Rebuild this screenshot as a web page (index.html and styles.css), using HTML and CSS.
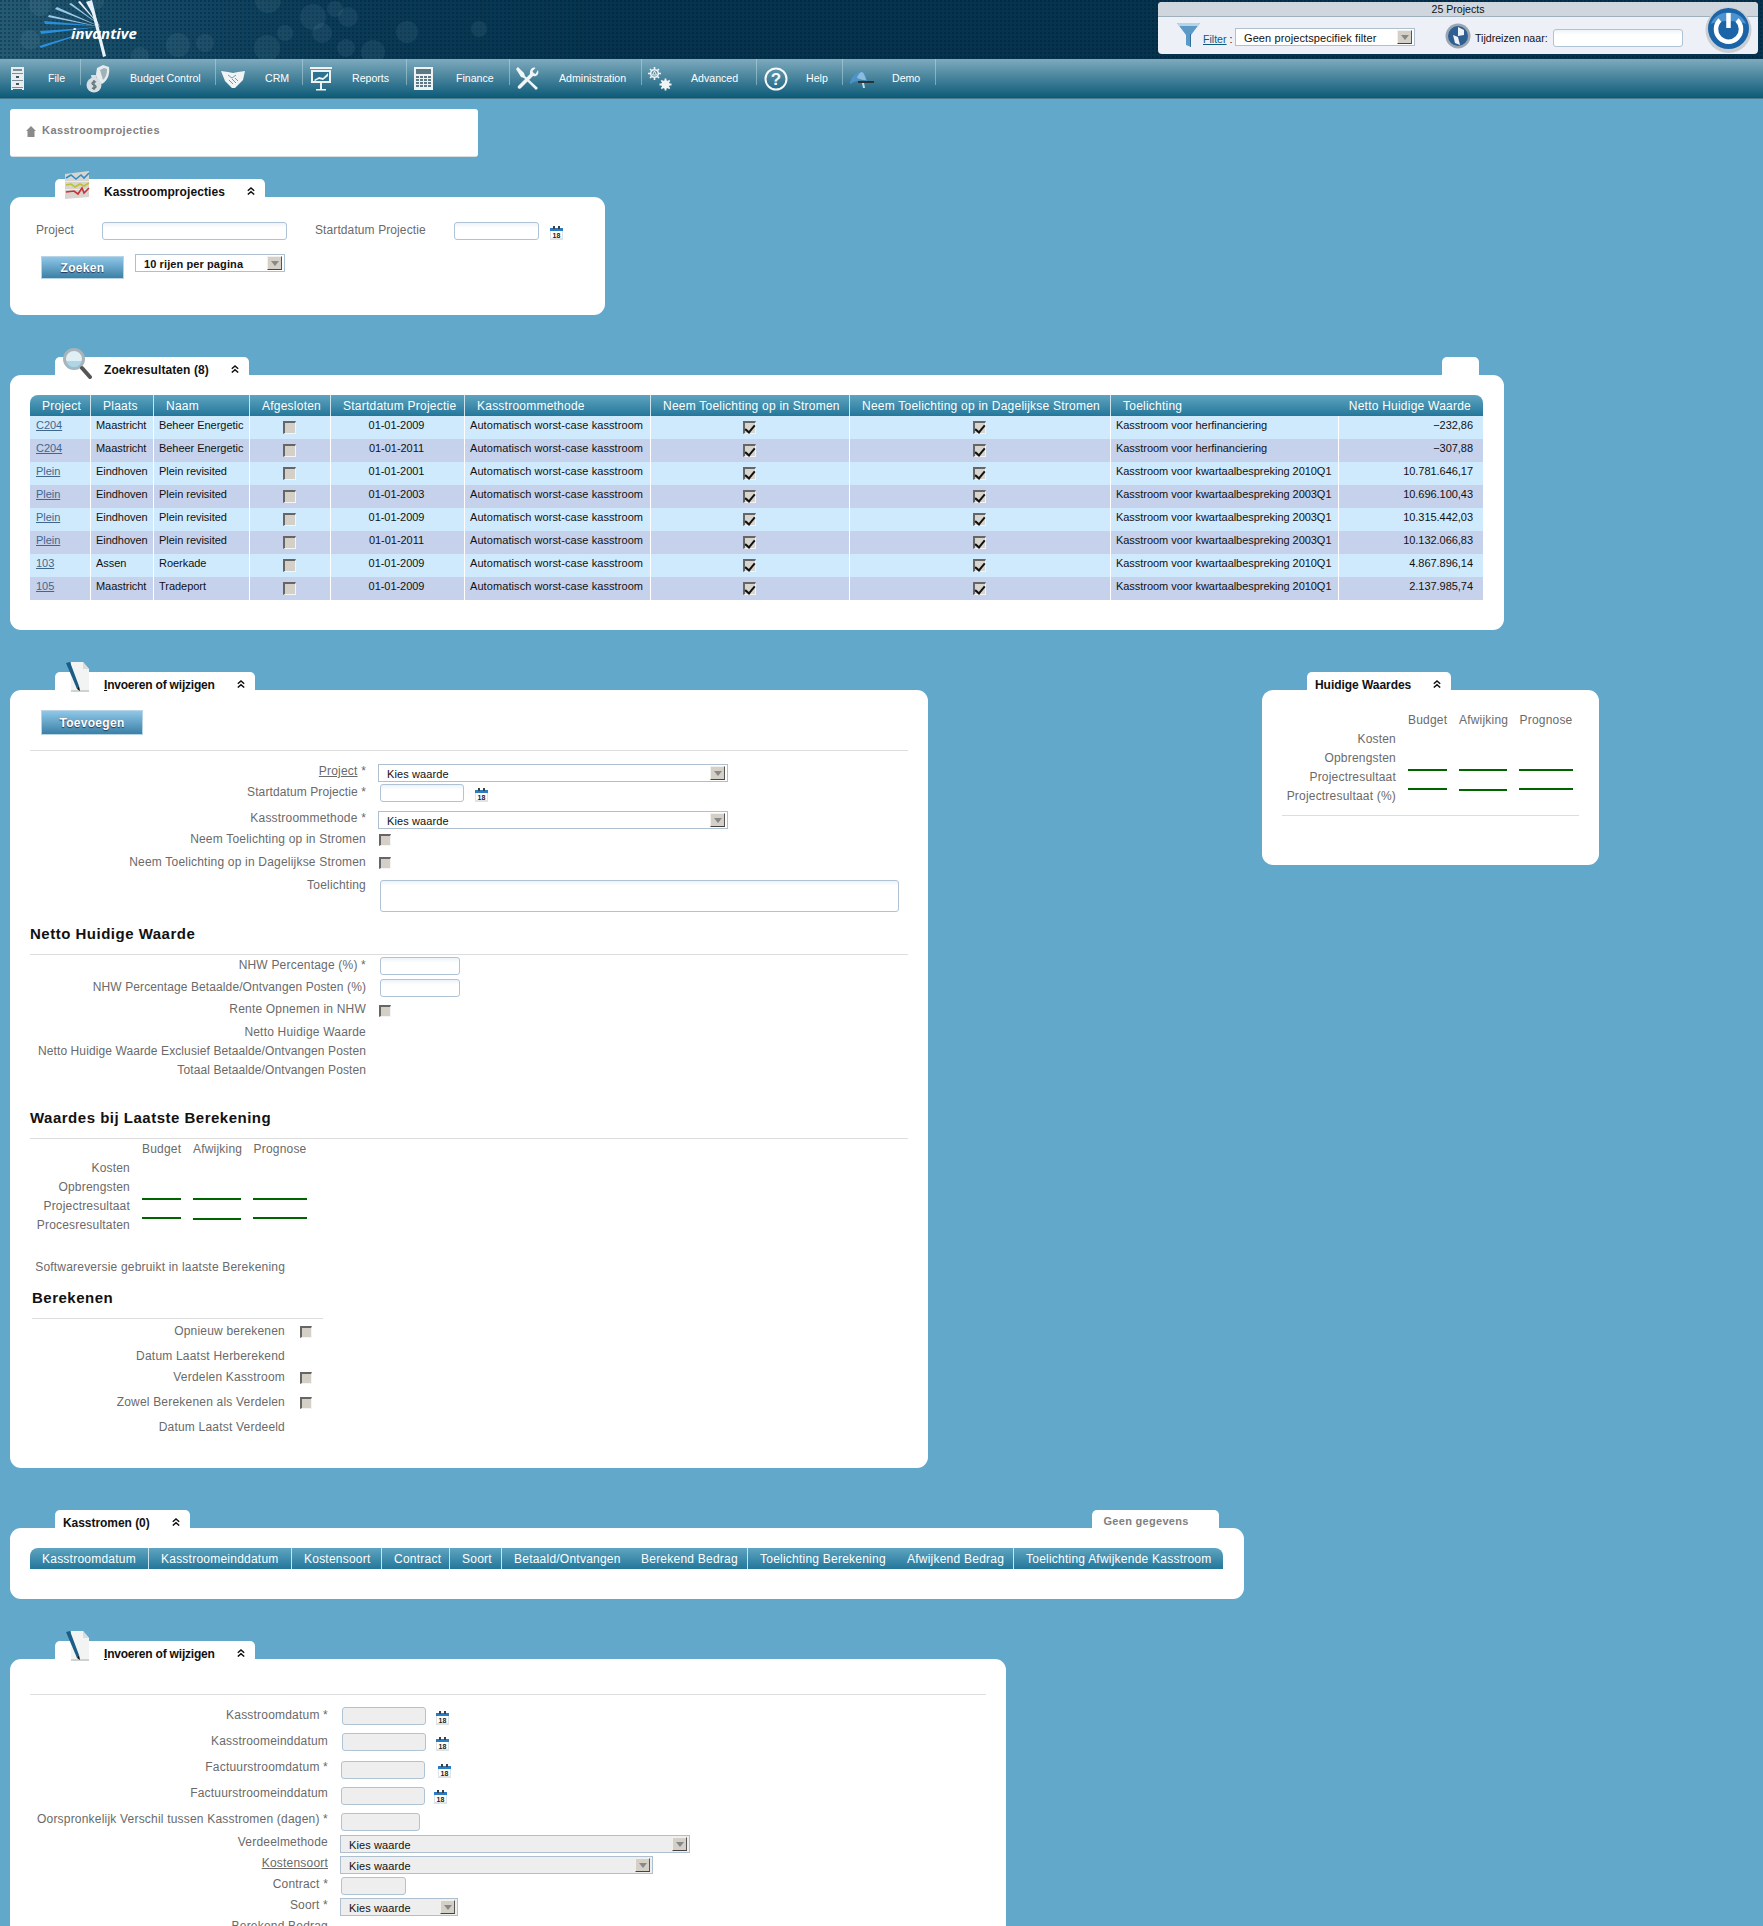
FILE: index.html
```html
<!DOCTYPE html>
<html lang="nl">
<head>
<meta charset="utf-8">
<title>Kasstroomprojecties</title>
<link rel="stylesheet" href="styles.css">
</head>
<body>
<svg class="defs" aria-hidden="true">
  <symbol id="i-cabinet" viewBox="0 0 15 23"><path fill="#e8eef0" d="M1 0h13v23h-2v-1H3v1H1z"/><path fill="#7c8f98" d="M3 2h9v2H3zM2 6h11v1H2zM2 13h11v1H2zM2 20h11v1H2z"/><path fill="#44565f" d="M6 9h3v2H6zM6 16h3v2H6z"/></symbol>
  <symbol id="i-budget" viewBox="0 0 24 28"><path fill="#e6ebed" d="M11 3l6-3 6 2c1 7-1 13-7 17-3-2-6-6-6-10z"/><path fill="#9fb2ba" d="M14 5l4-2 3 1c0 5-1 8-4 11z"/><circle cx="8" cy="20" r="7.500" fill="#d8dfe2"/><path fill="#d8dfe2" d="M5 10h6l-1 5H6z"/><path fill="none" stroke="#66767e" stroke-width="1.400" d="M10 17c-2-1-4 0-4 1.500s4 1.500 4 3-2 2.500-4 1.500M8 15v10"/></symbol>
  <symbol id="i-shake" viewBox="0 0 24 18"><path fill="#f0f4f5" d="M0 1l7 1 5 1 5-1 7-1-2 9-8 8h-3L4 11z"/><path fill="none" stroke="#7d98a5" stroke-width="1" d="M7 5l4 3 4-3M8 10l4 4M11 9l4 4M14 8l3 3"/></symbol>
  <symbol id="i-board" viewBox="0 0 22 24"><path fill="#eef2f3" d="M0 0h22v2H0zM1 3h20v13H1zM10 16h2v6h-2zM6 22h10v1.500H6z"/><path fill="#2c7290" d="M3 5h16v9H3z"/><path fill="#eef2f3" d="M4 13l5-3 4 1 5-5v3l-5 4-4-1-4 2z"/></symbol>
  <symbol id="i-calc" viewBox="0 0 19 23"><path fill="#eef2f3" d="M0 0h19v23H0z"/><path fill="#5b7884" d="M2 2h15v5H2z"/><path fill="#5b7884" d="M2 9h3v2H2zM6 9h3v2H6zM10 9h3v2h-3zM14 9h3v2h-3zM2 12h3v2H2zM6 12h3v2H6zM10 12h3v2h-3zM14 12h3v2h-3zM2 15h3v2H2zM6 15h3v2H6zM10 15h3v2h-3zM14 15h3v2h-3zM2 18h3v2H2zM6 18h3v2H6zM10 18h3v2h-3zM14 18h3v2h-3z"/></symbol>
  <symbol id="i-tools" viewBox="0 0 23 23"><path fill="#f2f5f6" d="M0 2l2-2 6 6 1 3 13 12-2 2L8 11 5 10zM22 3c1 3 0 5-2 6-2 .5-3 0-3 0L5 21c-2 2-4 0-3-2L14 7s-.5-2 .5-4c1-2 3-3 5-2l-3 3 1 2 2 1z"/></symbol>
  <symbol id="i-gears" viewBox="0 0 24 24"><g fill="none" stroke="#f2f5f6"><circle cx="6.500" cy="6.500" r="3.800" stroke-width="1.600"/><path stroke-width="1.600" d="M6.500 0v2M6.500 11v2M0 6.500h2M11 6.500h2M2 2l1.500 1.500M9.500 9.500L11 11M11 2L9.500 3.500M3.500 9.500L2 11"/><path stroke-width="1" d="M6.500 4l-2 4h4z"/></g><circle cx="17.500" cy="17.500" r="4.200" fill="#f2f5f6"/><circle cx="17.500" cy="17.500" r="1.400" fill="#2c7290"/><path stroke="#f2f5f6" stroke-width="1.800" d="M17.500 11.500v12M11.500 17.500h12M13.300 13.300l8.400 8.400M21.700 13.300l-8.400 8.400"/></symbol>
  <symbol id="i-help" viewBox="0 0 24 24"><circle cx="12" cy="12" r="10.500" fill="none" stroke="#f5f8f9" stroke-width="2"/><text x="12" y="18" text-anchor="middle" class="help-q">?</text></symbol>
  <symbol id="i-demo" viewBox="0 0 26 18"><path fill="#4d93c7" d="M1 12C4 5 8 1 12 1c3 0 5 4 6 10l-4-1C11 10 6 11 1 14z"/><path fill="#8cbcdc" d="M8 8c1-3 3-6 5-6 2 1 3 4 4 8l-3 0c-2-1-4-1-6-2z"/><path fill="#27333a" d="M9 11h16v2H9z"/><path fill="#d0dbe0" d="M13 13h2l1 5h-2z"/></symbol>
  <symbol id="i-chart" viewBox="0 0 26 28"><path fill="#d8d4cf" d="M1 3l24-3v26l-24 2z"/><path fill="#eeebe7" d="M1 10h24v1H1zM1 18h24v1H1z"/><path fill="none" stroke="#2d8ec9" stroke-width="1.600" d="M2 7l5-3 5 4 5-4 3 3 5-5"/><path fill="none" stroke="#bdc52a" stroke-width="1.600" d="M2 14l5-1 4 3 5-3 4 2 5-3"/><path fill="none" stroke="#c8323c" stroke-width="1.600" d="M2 21l8-1 4 3 4-6 2 5 5-5"/></symbol>
  <symbol id="i-glass" viewBox="0 0 30 32"><circle cx="12" cy="12" r="9.500" fill="#dfeff5" stroke="#a9b3b8" stroke-width="3"/><path fill="#8fc4da" d="M4 14a8 8 0 0 0 16 0z" opacity=".6"/><path stroke="#555" stroke-width="4" stroke-linecap="round" d="M20 21l8 9"/></symbol>
  <symbol id="i-pen" viewBox="0 0 24 30"><path fill="#f2f3f3" d="M5 0h12l6 7v22H5z"/><path fill="#d9dcdc" d="M17 0l6 7h-6z"/><path fill="#cfd2d2" d="M5 28h18v2H5z"/><path fill="#1b5d86" d="M0 1l4-1 9 24-2 3z"/><path fill="#111" d="M11 27l2-3 1 5z"/></symbol>
  <symbol id="i-cal" viewBox="0 0 13 14"><path fill="#dfe3e6" d="M0 2h13v12H0z"/><path fill="#fff" d="M1 5h11v7H1z"/><path fill="#2c7cc4" d="M0 2h13v3H0z"/><path fill="#33424c" d="M3 0h2v3H3zM8 0h2v3H8z"/><text x="6.500" y="11.500" text-anchor="middle" class="cal-d">18</text></symbol>
  <symbol id="i-chev" viewBox="0 0 8 8"><path fill="none" stroke="#111" stroke-width="1.500" d="M.8 3.800L4 1l3.200 2.800M.8 7.500L4 4.700l3.200 2.800"/></symbol>
  <symbol id="i-house" viewBox="0 0 10 11"><path fill="#8a8a8a" d="M5 0l5 5H8.500v6h-7V5H0z"/></symbol>
  <symbol id="i-funnel" viewBox="0 0 23 24"><path fill="#5b9ac6" d="M0 0h23L14 12v12l-5-2V12z"/><path fill="#b4d4e8" d="M0 0h23l-2 3H2z"/><path fill="#2f6f9e" d="M13 11h1v13l-1-.5z"/></symbol>
  <symbol id="i-clock" viewBox="0 0 26 26"><circle cx="13" cy="13" r="12.500" fill="#9aa7b2"/><circle cx="13" cy="13" r="10" fill="#2f5f92"/><path fill="#eef2f6" d="M13 4l6 3v5l-6 1zM8 12l5 2 2 8-5-2z"/></symbol>
  <symbol id="i-power" viewBox="0 0 47 46"><circle cx="23.500" cy="23" r="23" fill="#c9ced2"/><circle cx="23.500" cy="21.500" r="20.500" fill="#1c64a8"/><path fill="#4c93cf" d="M6 17a18 15 0 0 1 35 0c-8-4-27-4-35 0z"/><path fill="none" stroke="#fff" stroke-width="4.500" d="M15 13a12.500 12.500 0 1 0 17 0"/><path stroke="#fff" stroke-width="4.500" d="M23.500 6v15"/></symbol>
  <symbol id="i-logo" viewBox="0 0 140 58"><g fill="#2a8fdc"><path d="M100 26L44 21l1 3z"/><path d="M100 27L40 31l1 3z"/><path d="M100 28L39 46l2 2z"/></g><g fill="#9cc9ea"><path d="M101 27L49 15l-1 2z"/><path d="M101 27L57 7l-2 2z"/><path d="M101 26L71 3l-2 1z"/></g><g fill="#e7f2fa"><path d="M100 26L80 1l-2 1z"/><path d="M100 28L89 1l-3 1z"/><path d="M89 1l3-1 14 56-3 1z"/></g></symbol>
</svg>

<header class="top">
  <svg class="bubbles" viewBox="0 0 1100 59" aria-hidden="true">
    <circle cx="40" cy="5" r="11"/><circle cx="95" cy="1" r="9"/><circle cx="30" cy="40" r="10"/><circle cx="140" cy="56" r="9"/>
    <circle cx="178" cy="45" r="12"/><circle cx="205" cy="43" r="9"/><circle cx="267" cy="48" r="13"/><circle cx="285" cy="33" r="8"/>
    <circle cx="268" cy="0" r="13"/><circle cx="313" cy="17" r="13"/><circle cx="335" cy="9" r="8"/><circle cx="348" cy="17" r="10"/>
    <circle cx="322" cy="33" r="10"/><circle cx="346" cy="48" r="9"/><circle cx="373" cy="52" r="12"/><circle cx="407" cy="32" r="11"/><circle cx="479" cy="29" r="8"/>
  </svg>
  <a class="logo"><svg class="logo-art"><use href="#i-logo"/></svg><span class="logo-text">invantive</span></a>
  <div class="status">
    <div class="status-title">25 Projects</div>
    <div class="status-body">
      <svg class="ic-funnel"><use href="#i-funnel"/></svg>
      <span class="filter-label"><a href="#">Filter</a> :</span>
      <div class="sel sel-filter"><span>Geen projectspecifiek filter</span><i class="arrow"></i></div>
      <svg class="ic-clock"><use href="#i-clock"/></svg>
      <span class="travel-label">Tijdreizen naar:</span>
      <input class="inp inp-travel" type="text">
    </div>
    <svg class="ic-power"><use href="#i-power"/></svg>
  </div>
</header>

<nav class="nav">
  <a class="nav-item"><span class="slot"><svg class="n-cabinet"><use href="#i-cabinet"/></svg></span>File</a>
  <a class="nav-item"><span class="slot"><svg class="n-budget"><use href="#i-budget"/></svg></span>Budget Control</a>
  <a class="nav-item"><span class="slot"><svg class="n-shake"><use href="#i-shake"/></svg></span>CRM</a>
  <a class="nav-item"><span class="slot"><svg class="n-board"><use href="#i-board"/></svg></span>Reports</a>
  <a class="nav-item"><span class="slot"><svg class="n-calc"><use href="#i-calc"/></svg></span>Finance</a>
  <a class="nav-item"><span class="slot"><svg class="n-tools"><use href="#i-tools"/></svg></span>Administration</a>
  <a class="nav-item"><span class="slot"><svg class="n-gears"><use href="#i-gears"/></svg></span>Advanced</a>
  <a class="nav-item"><span class="slot"><svg class="n-help"><use href="#i-help"/></svg></span>Help</a>
  <a class="nav-item"><span class="slot"><svg class="n-demo"><use href="#i-demo"/></svg></span>Demo</a>
</nav>

<main>
  <div class="crumb"><svg class="ic-house"><use href="#i-house"/></svg><span>Kasstroomprojecties</span></div>

  <section class="sec sec-search">
    <div class="tabs">
      <div class="tab tab-ic"><svg class="tab-icon ti-chart"><use href="#i-chart"/></svg>Kasstroomprojecties<svg class="chev"><use href="#i-chev"/></svg></div>
    </div>
    <div class="panel search-panel">
      <div class="search-row">
        <label class="lbl-project">Project</label>
        <input class="inp inp-project" type="text">
        <label class="lbl-start">Startdatum Projectie</label>
        <input class="inp inp-start" type="text">
        <svg class="cal"><use href="#i-cal"/></svg>
      </div>
      <div class="search-row search-row-2">
        <button class="btn btn-search" type="button">Zoeken</button>
        <div class="sel sel-rows"><span>10 rijen per pagina</span><i class="arrow"></i></div>
      </div>
    </div>
  </section>

  <section class="sec sec-results">
    <div class="tabs">
      <div class="tab tab-ic"><svg class="tab-icon ti-glass"><use href="#i-glass"/></svg>Zoekresultaten (8)<svg class="chev"><use href="#i-chev"/></svg></div>
      <div class="tab tab-stub tab-stub-empty"></div>
    </div>
    <div class="panel results-panel">
      <table class="grid grid-results">
        <colgroup><col class="c1"><col class="c2"><col class="c3"><col class="c4"><col class="c5"><col class="c6"><col class="c7"><col class="c8"><col class="c9"><col class="c10"></colgroup>
        <thead><tr><th>Project</th><th>Plaats</th><th>Naam</th><th>Afgesloten</th><th>Startdatum Projectie</th><th>Kasstroommethode</th><th>Neem Toelichting op in Stromen</th><th>Neem Toelichting op in Dagelijkse Stromen</th><th class="nob">Toelichting</th><th class="num">Netto Huidige Waarde</th></tr></thead>
        <tbody>
          <tr><td><a href="#">C204</a></td><td>Maastricht</td><td>Beheer Energetic</td><td class="mid"><i class="cb"></i></td><td class="mid">01-01-2009</td><td>Automatisch worst-case kasstroom</td><td class="mid"><i class="cb on"></i></td><td class="mid"><i class="cb on"></i></td><td>Kasstroom voor herfinanciering</td><td class="num">−232,86</td></tr>
          <tr><td><a href="#">C204</a></td><td>Maastricht</td><td>Beheer Energetic</td><td class="mid"><i class="cb"></i></td><td class="mid">01-01-2011</td><td>Automatisch worst-case kasstroom</td><td class="mid"><i class="cb on"></i></td><td class="mid"><i class="cb on"></i></td><td>Kasstroom voor herfinanciering</td><td class="num">−307,88</td></tr>
          <tr><td><a href="#">Plein</a></td><td>Eindhoven</td><td>Plein revisited</td><td class="mid"><i class="cb"></i></td><td class="mid">01-01-2001</td><td>Automatisch worst-case kasstroom</td><td class="mid"><i class="cb on"></i></td><td class="mid"><i class="cb on"></i></td><td>Kasstroom voor kwartaalbespreking 2010Q1</td><td class="num">10.781.646,17</td></tr>
          <tr><td><a href="#">Plein</a></td><td>Eindhoven</td><td>Plein revisited</td><td class="mid"><i class="cb"></i></td><td class="mid">01-01-2003</td><td>Automatisch worst-case kasstroom</td><td class="mid"><i class="cb on"></i></td><td class="mid"><i class="cb on"></i></td><td>Kasstroom voor kwartaalbespreking 2003Q1</td><td class="num">10.696.100,43</td></tr>
          <tr><td><a href="#">Plein</a></td><td>Eindhoven</td><td>Plein revisited</td><td class="mid"><i class="cb"></i></td><td class="mid">01-01-2009</td><td>Automatisch worst-case kasstroom</td><td class="mid"><i class="cb on"></i></td><td class="mid"><i class="cb on"></i></td><td>Kasstroom voor kwartaalbespreking 2003Q1</td><td class="num">10.315.442,03</td></tr>
          <tr><td><a href="#">Plein</a></td><td>Eindhoven</td><td>Plein revisited</td><td class="mid"><i class="cb"></i></td><td class="mid">01-01-2011</td><td>Automatisch worst-case kasstroom</td><td class="mid"><i class="cb on"></i></td><td class="mid"><i class="cb on"></i></td><td>Kasstroom voor kwartaalbespreking 2003Q1</td><td class="num">10.132.066,83</td></tr>
          <tr><td><a href="#">103</a></td><td>Assen</td><td>Roerkade</td><td class="mid"><i class="cb"></i></td><td class="mid">01-01-2009</td><td>Automatisch worst-case kasstroom</td><td class="mid"><i class="cb on"></i></td><td class="mid"><i class="cb on"></i></td><td>Kasstroom voor kwartaalbespreking 2010Q1</td><td class="num">4.867.896,14</td></tr>
          <tr><td><a href="#">105</a></td><td>Maastricht</td><td>Tradeport</td><td class="mid"><i class="cb"></i></td><td class="mid">01-01-2009</td><td>Automatisch worst-case kasstroom</td><td class="mid"><i class="cb on"></i></td><td class="mid"><i class="cb on"></i></td><td>Kasstroom voor kwartaalbespreking 2010Q1</td><td class="num">2.137.985,74</td></tr>
        </tbody>
      </table>
    </div>
  </section>

  <div class="split">
    <section class="sec sec-edit">
      <div class="tabs">
        <div class="tab tab-ic"><svg class="tab-icon ti-pen"><use href="#i-pen"/></svg><span class="tab-tight"><u>I</u>nvoeren of wijzigen</span><svg class="chev"><use href="#i-chev"/></svg></div>
      </div>
      <div class="panel edit-panel">
        <button class="btn btn-add" type="button">Toevoegen</button>
        <hr class="rule rule-first">
        <div class="form form-main">
          <div class="row h21"><label><a href="#">Project</a> *</label><div class="sel sel-wide"><span>Kies waarde</span><i class="arrow"></i></div></div>
          <div class="row h26"><label class="tight">Startdatum Projectie *</label><input class="inp inp-date up1" type="text"><svg class="cal cal-edit"><use href="#i-cal"/></svg></div>
          <div class="row h21"><label>Kasstroommethode *</label><div class="sel sel-wide"><span>Kies waarde</span><i class="arrow"></i></div></div>
          <div class="row h23"><label>Neem Toelichting op in Stromen</label><i class="cb cb-field"></i></div>
          <div class="row h23"><label>Neem Toelichting op in Dagelijkse Stromen</label><i class="cb cb-field"></i></div>
          <div class="row"><label>Toelichting</label><textarea class="inp area"></textarea></div>
        </div>
        <h3 class="sub sub-nhw">Netto Huidige Waarde</h3>
        <div class="form form-main form-nhw">
          <div class="row h22"><label>NHW Percentage (%) *</label><input class="inp inp-pct up1" type="text"></div>
          <div class="row h22"><label class="tight">NHW Percentage Betaalde/Ontvangen Posten (%)</label><input class="inp inp-pct up1" type="text"></div>
          <div class="row h23"><label>Rente Opnemen in NHW</label><i class="cb cb-field cb-low"></i></div>
          <div class="row h19"><label>Netto Huidige Waarde</label></div>
          <div class="row h19"><label class="tight">Netto Huidige Waarde Exclusief Betaalde/Ontvangen Posten</label></div>
          <div class="row h19"><label class="tight">Totaal Betaalde/Ontvangen Posten</label></div>
        </div>
        <h3 class="sub sub-calc">Waardes bij Laatste Berekening</h3>
        <div class="vals">
          <span></span><span class="vh">Budget</span><span class="vh">Afwijking</span><span class="vh">Prognose</span>
          <span class="vl">Kosten</span><span></span><span></span><span></span>
          <span class="vl">Opbrengsten</span><span></span><span></span><span></span>
          <span class="vl">Projectresultaat</span><span class="v"></span><span class="v"></span><span class="v"></span>
          <span class="vl">Procesresultaten</span><span class="v"></span><span class="v low"></span><span class="v"></span>
        </div>
        <div class="form form-narrow form-soft">
          <div class="row h28"><label>Softwareversie gebruikt in laatste Berekening</label></div>
        </div>
        <div class="narrow">
          <h3 class="sub sub-reken">Berekenen</h3>
        </div>
        <div class="form form-narrow form-reken">
          <div class="row h25"><label>Opnieuw berekenen</label><i class="cb cb-field"></i></div>
          <div class="row h21"><label>Datum Laatst Herberekend</label></div>
          <div class="row h25"><label>Verdelen Kasstroom</label><i class="cb cb-field"></i></div>
          <div class="row h25"><label>Zowel Berekenen als Verdelen</label><i class="cb cb-field"></i></div>
          <div class="row h19"><label>Datum Laatst Verdeeld</label></div>
        </div>
      </div>
    </section>

    <section class="sec sec-side">
      <div class="tabs tabs-side">
        <div class="tab tab-plain tab-bold">Huidige Waardes<svg class="chev"><use href="#i-chev"/></svg></div>
      </div>
      <div class="panel side-panel">
        <div class="vals vals-side">
          <span></span><span class="vh">Budget</span><span class="vh">Afwijking</span><span class="vh">Prognose</span>
          <span class="vl">Kosten</span><span></span><span></span><span></span>
          <span class="vl">Opbrengsten</span><span></span><span></span><span></span>
          <span class="vl">Projectresultaat</span><span class="v"></span><span class="v"></span><span class="v"></span>
          <span class="vl">Projectresultaat (%)</span><span class="v"></span><span class="v low"></span><span class="v"></span>
        </div>
        <hr class="rule rule-side">
      </div>
    </section>
  </div>

  <section class="sec sec-flows">
    <div class="tabs">
      <div class="tab tab-plain">Kasstromen (0)<svg class="chev"><use href="#i-chev"/></svg></div>
      <div class="tab tab-stub">Geen gegevens</div>
    </div>
    <div class="panel flows-panel">
      <table class="grid grid-flows">
        <colgroup><col class="f1"><col class="f2"><col class="f3"><col class="f4"><col class="f5"><col class="f6"><col class="f7"><col class="f8"><col class="f9"><col class="f10"></colgroup>
        <thead><tr><th>Kasstroomdatum</th><th>Kasstroomeinddatum</th><th>Kostensoort</th><th>Contract</th><th>Soort</th><th class="nob">Betaald/Ontvangen</th><th>Berekend Bedrag</th><th class="nob">Toelichting Berekening</th><th>Afwijkend Bedrag</th><th>Toelichting Afwijkende Kasstroom</th></tr></thead>
      </table>
    </div>
  </section>

  <section class="sec sec-line">
    <div class="tabs">
      <div class="tab tab-ic"><svg class="tab-icon ti-pen"><use href="#i-pen"/></svg><span class="tab-tight"><u>I</u>nvoeren of wijzigen</span><svg class="chev"><use href="#i-chev"/></svg></div>
    </div>
    <div class="panel line-panel">
      <hr class="rule">
      <div class="form form-line">
        <div class="row h26"><label>Kasstroomdatum *</label><input class="inp inp-off inp-l1 up1" type="text"><svg class="cal cal-l1"><use href="#i-cal"/></svg></div>
        <div class="row h26"><label>Kasstroomeinddatum</label><input class="inp inp-off inp-l1 up1" type="text"><svg class="cal cal-l1"><use href="#i-cal"/></svg></div>
        <div class="row h26"><label>Factuurstroomdatum *</label><input class="inp inp-off inp-l2 dn1" type="text"><svg class="cal cal-l2"><use href="#i-cal"/></svg></div>
        <div class="row h26"><label>Factuurstroomeinddatum</label><input class="inp inp-off inp-l2 dn1" type="text"><svg class="cal cal-l3"><use href="#i-cal"/></svg></div>
        <div class="row h23"><label>Oorspronkelijk Verschil tussen Kasstromen (dagen) *</label><input class="inp inp-off inp-l3 dn1" type="text"></div>
        <div class="row h21"><label>Verdeelmethode</label><div class="sel sel-off sel-v"><span>Kies waarde</span><i class="arrow"></i></div></div>
        <div class="row h21"><label><a href="#">Kostensoort</a></label><div class="sel sel-off sel-k"><span>Kies waarde</span><i class="arrow"></i></div></div>
        <div class="row h21"><label>Contract *</label><input class="inp inp-off inp-c" type="text"></div>
        <div class="row h21"><label>Soort *</label><div class="sel sel-off sel-s"><span>Kies waarde</span><i class="arrow"></i></div></div>
        <div class="row h21"><label>Berekend Bedrag</label></div>
      </div>
    </div>
  </section>
</main>
</body>
</html>
```

FILE: styles.css
```css
* { box-sizing: border-box; }
html, body { margin: 0; padding: 0; height: 1926px; overflow: hidden; }
body { background: #62a8cb; font: 12px/14px "Liberation Sans", Arial, sans-serif; color: #6a6a6a; letter-spacing: .2px; }
.defs { display: none; }
a { color: inherit; }

/* header */
.top { position: relative; height: 59px; display: flex; justify-content: space-between; overflow: hidden;
  background-color: #07344f;
  background-image: radial-gradient(circle at 1px 1px, rgba(0,20,40,.3) 1px, transparent 1.4px), linear-gradient(90deg, #245a72 0, #154a66 130px, #0a3b57 330px, #06344f 620px);
  background-size: 4px 4px, 100% 100%; }
.bubbles { position: absolute; left: 0; top: 0; width: 1100px; height: 59px; fill: rgba(150,200,215,.09); }
.logo { position: relative; display: block; width: 140px; height: 58px; }
.logo-art { width: 140px; height: 58px; display: block; }
.logo-text { position: absolute; left: 71px; top: 24px; font: italic bold 15px/18px "Open Sans", sans-serif; color: #fff; letter-spacing: 0; }

.status { position: relative; width: 600px; height: 52px; margin: 2px 5px 0 0; background: #eef0f8; border-radius: 4px; color: #111; font-size: 10.600px; letter-spacing: 0; }
.status-title { height: 15px; line-height: 15px; text-align: center; background: #cfd6dd; border-bottom: 1px solid #9fb0bd; border-radius: 4px 4px 0 0; }
.status-body { display: flex; align-items: flex-start; height: 37px; padding-top: 5px; }
.ic-funnel { width: 23px; height: 24px; margin: 1px 3px 0 19px; }
.filter-label { line-height: 14px; width: 32px; margin-top: 10px; }
.filter-label a { color: #0c5a7c; }
.sel-filter { width: 180px; margin-top: 6px; font-size: 10.600px; letter-spacing: 0; }
.ic-clock { width: 26px; height: 26px; margin: 1px 4px 0 30px; }
.travel-label { margin-top: 9px; line-height: 14px; width: 78px; }
.inp-travel { width: 130px; margin-top: 7px; }
.ic-power { position: absolute; right: 6px; top: 5px; width: 47px; height: 46px; }

/* nav */
.nav { height: 40px; display: flex; align-items: center; background: linear-gradient(#7eaabd, #0c5a78); border-bottom: 1px solid #47798f; }
.nav-item { display: flex; align-items: center; flex: none; height: 100%; color: #fff; font-size: 10.600px; line-height: 14px; letter-spacing: 0; padding-bottom: 2px; position: relative; white-space: nowrap; }
.nav-item:nth-child(1) { width: 81px; }
.nav-item:nth-child(2) { width: 135px; }
.nav-item:nth-child(3) { width: 87px; }
.nav-item:nth-child(4) { width: 104px; }
.nav-item:nth-child(5) { width: 103px; }
.nav-item:nth-child(6) { width: 132px; }
.nav-item:nth-child(7) { width: 115px; }
.nav-item:nth-child(8) { width: 86px; }
.nav-item:nth-child(9) { width: 93px; }
.nav-item::after { content: ""; position: absolute; right: 0; top: 0; height: 26px; border-right: 1px solid rgba(190,220,230,.5); }
.slot { display: flex; align-items: center; flex: none; width: 49px; margin-top: 2px; padding-left: 6px; }
.nav-item:first-child .slot { width: 48px; }
.n-cabinet { width: 15px; height: 23px; margin-left: 4px; }
.n-budget { width: 24px; height: 28px; margin-left: -1px; }
.n-shake { width: 24px; height: 18px; margin-left: -1px; }
.n-board { width: 22px; height: 24px; margin-left: 1px; }
.n-calc { width: 19px; height: 23px; margin-left: 1px; }
.n-tools { width: 23px; height: 23px; }
.n-gears { width: 24px; height: 24px; }
.n-help { width: 24px; height: 24px; margin-left: 1px; }
.n-demo { width: 26px; height: 18px; }

/* breadcrumb */
.crumb { width: 468px; height: 48px; margin: 10px 0 0 10px; padding: 14px 0 0 16px; display: flex; align-items: flex-start; background: #fff; border-radius: 3px; border-bottom: 1px solid #ddd; font-size: 11px; font-weight: bold; color: #808080; letter-spacing: .45px; }
.ic-house { width: 10px; height: 11px; margin: 3px 6px 0 0; }

/* sections */
.sec { margin: 42px 0 0 10px; }
.sec-search { margin-top: 22px; width: 595px; }
.sec-results { width: 1494px; }
.sec-flows { width: 1233.500px; }
.sec-line { width: 995.500px; }
.tabs { display: flex; justify-content: space-between; height: 18px; padding: 0 25px 0 45px; }
.tab { position: relative; display: flex; align-items: flex-start; height: 18px; padding: 5px 10px 0 7px; background: #fff; border-radius: 5px 5px 0 0; color: #111; font-size: 12px; line-height: 16px; font-weight: bold; letter-spacing: .08px; white-space: nowrap; }
.tab u { text-decoration: underline; }
.tab-tight { letter-spacing: -.2px; }
.tab-ic { padding-left: 49px; }
.tab-icon { position: absolute; left: 9px; }
.ti-chart { top: -8px; width: 26px; height: 28px; }
.ti-glass { top: -10px; left: 7px; width: 30px; height: 32px; }
.ti-pen { top: -10px; left: 11px; width: 24px; height: 30px; }
.chev { width: 8px; height: 8px; margin: 3px 0 0 22px; }
.tab-plain { padding-left: 8px; letter-spacing: -.05px; }
.tab-stub { width: 127px; padding-left: 12px; color: #808080; font-size: 11px; line-height: 12px; padding-top: 5px; letter-spacing: .3px; }
.tab-stub-empty { width: 37px; padding: 0; }
.panel { background: #fff; border-radius: 11px; }

/* search */
.search-panel { height: 118px; padding: 25px 0 0 26px; }
.search-row { display: flex; align-items: flex-start; }
.search-row label { line-height: 16px; letter-spacing: .1px; }
.lbl-project { width: 66px; }
.inp-project { width: 185px; }
.lbl-start { width: 139px; margin-left: 28px; }
.inp-start { width: 85px; }
.cal { width: 13px; height: 14px; flex: none; }
.search-row .cal { margin: 4px 0 0 11px; }
.search-row-2 { margin: 14px 0 0 5px; }
.btn-search { width: 83px; margin-top: 2px; }
.sel-rows { width: 150px; margin-left: 11px; font-weight: bold; letter-spacing: .45px; }

/* controls */
.inp { display: block; height: 18px; padding: 0 3px; border: 1px solid #afc3d6; border-radius: 3px; background: linear-gradient(#eef3f8, #fff 5px); font: inherit; flex: none; }
.inp-off { background: #eee; }
.sel { display: flex; align-items: center; justify-content: space-between; flex: none; height: 18px; padding: 1px 2px 0 8px; border: 1px solid #aebfd0; background: #fff; color: #111; font-size: 11px; line-height: 14px; letter-spacing: .1px; }
.sel-off { background: #eee; }
.arrow { display: block; position: relative; width: 15px; height: 14px; margin-top: -1px; background: #d4d0c8; border: 1px solid; border-color: #f2f0ec #555 #444 #f2f0ec; }
.arrow::after { content: ""; position: absolute; left: 3px; top: 4px; border: 4px solid transparent; border-top: 5px solid #888; border-bottom: 0; }
.btn { display: block; height: 23px; padding: 0; border: 1px solid #b9d4e4; background: linear-gradient(#8fc7e8, #3b80a6); color: #fff; font: bold 12px/20px "Liberation Sans", sans-serif; letter-spacing: .3px; text-shadow: 0 1px 1px #235; }
.cb { display: block; position: relative; width: 13px; height: 13px; background: #d4d0c8; border: 2px solid; border-color: #666 #f4f4f4 #f4f4f4 #666; border-width: 2px 1px 1px 2px; }
.cb.on { background: #d8d5ce; }
.cb.on::after { content: ""; position: absolute; left: 2px; top: 0; width: 4px; height: 8px; border: solid #111; border-width: 0 2px 2px 0; transform: rotate(40deg); }

/* tables */
.grid { table-layout: fixed; border-collapse: separate; border-spacing: 0; color: #111; font-size: 11px; letter-spacing: -.04px; }
.grid-results { width: 1453px; margin: 20px 0 0 20px; }
.grid-flows { width: 1193px; margin: 20px 0 0 20px; }
.c1 { width: 61px; } .c2 { width: 63px; } .c3 { width: 96px; } .c4 { width: 81px; } .c5 { width: 134px; }
.c6 { width: 186px; } .c7 { width: 199px; } .c8 { width: 261px; } .c9 { width: 228px; } .c10 { width: 144px; }
.f1 { width: 119px; } .f2 { width: 143px; } .f3 { width: 90px; } .f4 { width: 68px; } .f5 { width: 52px; }
.f6 { width: 127px; } .f7 { width: 119px; } .f8 { width: 147px; } .f9 { width: 119px; } .f10 { width: 209px; }
.grid th { height: 21px; padding: 0 0 0 12px; background: linear-gradient(#5ea4c0, #24779b); color: #fff; font-size: 12px; font-weight: normal; text-align: left; letter-spacing: .23px; white-space: nowrap; overflow: hidden; border-right: 1px solid #cfe3ec; }
.grid th:first-child { border-top-left-radius: 8px; }
.grid th:last-child { border-top-right-radius: 8px; border-right: 0; }
.grid th.nob { border-right: 0; }
.grid th.num { text-align: right; padding: 0 12px 0 0; }
.grid td { height: 23px; padding: 2px 0 0 5px; vertical-align: top; background: #cfeafd; border-right: 1px solid #fff; white-space: nowrap; overflow: hidden; }
.grid td:first-child { padding-left: 6px; }
.grid td:nth-child(6) { letter-spacing: .08px; }
.grid td:last-child { border-right: 0; }
.grid tbody tr:nth-child(even) td { background: #c6d2ec; }
.grid td.mid { text-align: center; padding: 2px 2px 0 0; }
.grid td.num { text-align: right; padding: 2px 10px 0 0; }
.grid td .cb { margin: 3px auto 0; }
.grid a { color: #3f6790; }
.results-panel { height: 255px; overflow: hidden; }
.flows-panel { height: 71px; overflow: hidden; }

/* edit form */
.split { display: flex; align-items: flex-start; }
.sec-edit { width: 918px; flex: none; }
.sec-side { width: 337px; flex: none; margin-left: 334px; }
.tabs-side { padding-left: 45px; }
.tab-bold { padding-left: 8px; }
.edit-panel { height: 778px; padding: 20px 20px 0 20px; }
.btn-add { width: 102px; margin-left: 11px; height: 25px; }
.rule { display: block; margin: 0; height: 0; border: 0; border-top: 1px solid #ddd; }
.rule-first { margin-top: 15px; }
.form { display: block; }
.form-main { margin-top: 13px; }
.row { display: flex; align-items: flex-start; }
.row label { flex: none; width: 336px; text-align: right; line-height: 14px; white-space: nowrap; }
.row label.tight { letter-spacing: .1px; }
.h19 { height: 19px; } .h21 { height: 21px; } .h22 { height: 22px; } .h23 { height: 23px; } .h25 { height: 25px; } .h26 { height: 26px; } .h28 { height: 28px; }
.sel-wide { width: 350px; margin-left: 12px; }
.inp-date { width: 84px; margin-left: 14px; }
.up1 { margin-top: -1px; }
.dn1 { margin-top: 1px; }
.cal-edit { margin: 3px 0 0 11px; }
.cb-field { margin: 2px 0 0 13px; width: 12px; height: 12px; }
.cb-low { margin-top: 3px; }
.area { width: 519px; height: 32px; margin: 2px 0 0 14px; resize: none; }
.sub { margin: 0; font-size: 15px; line-height: 20px; font-weight: bold; color: #111; padding-bottom: 10px; border-bottom: 1px solid #ddd; letter-spacing: .5px; }
.sub-nhw { margin-top: 12px; }
.form-nhw { margin-top: 3px; }
.inp-pct { width: 80px; margin-left: 14px; }
.sub-calc { margin-top: 26px; }
.vals { display: grid; grid-template-columns: 100px 39px 48px 54px; grid-auto-rows: 19px; column-gap: 12px; margin-top: 1px; line-height: 19px; }
.vh { text-align: center; }
.vl { text-align: right; white-space: nowrap; }
.v { height: 2px; margin-top: 1px; background: #006400; }
.v.low { margin-top: 2px; }
.form-soft { margin-top: 25px; }
.form-narrow .row label { width: 255px; }
.narrow { width: 291px; margin-left: 2px; }
.form-reken { margin-top: 5px; }
.form-narrow .cb-field { margin-left: 15px; }

/* side */
.side-panel { height: 175px; padding: 20px 20px 0; }
.vals-side { grid-template-columns: 114px 39px 48px 54px; margin-top: 1px; }
.rule-side { margin-top: 9px; }

/* line form */
.line-panel { height: 300px; padding: 35px 20px 0; }
.form-line { margin-top: 13px; }
.form-line .row label { width: 298px; }
.inp-l1 { width: 84px; margin-left: 14px; }
.inp-l2 { width: 84px; margin-left: 13px; }
.inp-l3 { width: 79px; margin-left: 13px; }
.inp-c { width: 65px; margin-left: 13px; }
.cal-l1 { margin: 3px 0 0 10px; }
.cal-l2 { margin: 4px 0 0 13px; }
.cal-l3 { margin: 4px 0 0 9px; }
.sel-v { width: 350px; margin-left: 12px; }
.sel-k { width: 313px; margin-left: 12px; }
.sel-s { width: 118px; margin-left: 12px; }

/* svg text */
.help-q { font: bold 17px "Liberation Sans", sans-serif; fill: #f5f8f9; }
.cal-d { font: bold 7px "Liberation Sans", sans-serif; fill: #222; letter-spacing: 0; }
```
